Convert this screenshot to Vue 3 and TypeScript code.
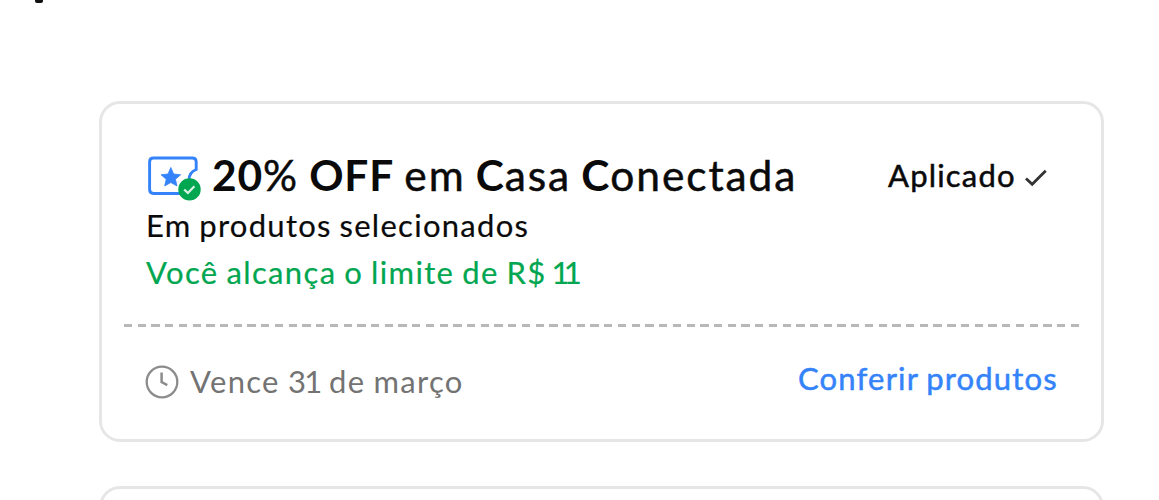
<script setup lang="ts">
interface Word {
  text: string
  strong?: boolean
  digits?: boolean
}

interface Coupon {
  title: Word[]
  scope: string
  limit: Word[]
  expires: Word[]
  status: string
  action: string
}

const coupon: Coupon = {
  title: [
    { text: '20', strong: true },
    { text: '% ' },
    { text: 'OFF', strong: true },
    { text: ' em ' },
    { text: 'C', strong: true },
    { text: 'asa ' },
    { text: 'C', strong: true },
    { text: 'onectada' },
  ],
  scope: 'Em produtos selecionados',
  limit: [{ text: 'Você alcança o limite de R$' }, { text: '11', digits: true }],
  expires: [{ text: 'Vence ' }, { text: '31', digits: true }, { text: ' de março' }],
  status: 'Aplicado',
  action: 'Conferir produtos',
}
</script>

<template>
  <main class="page">
    <div class="page__mark" aria-hidden="true"></div>

    <article class="coupon">
      <section class="coupon__body">
        <header class="coupon__header">
          <svg class="coupon__icon" width="56" height="48" viewBox="0 0 56 48" fill="none">
            <path
              d="M34 40.500H7.500Q3.600 40.500 3.600 36.600V8.900Q3.600 5 7.500 5H46.200Q50.200 5 50.200 9V16.500C45.200 18.500 43 21.500 43 27"
              stroke="#3483fa"
              stroke-width="2.900"
            />
            <path
              d="M24.800 14.500L27.700 21L34.700 21.700L29.400 26.300L31 33L24.800 29.500L18.700 33L20.200 26.300L15 21.700L22 21Z"
              fill="#3483fa"
              stroke="#3483fa"
              stroke-width="0.800"
            />
            <circle cx="43.500" cy="36.400" r="11.200" fill="#00a650" />
            <path d="M38.200 36.500L41.900 40L48.400 33.300" stroke="#d9f2e5" stroke-width="2.300" />
          </svg>
          <h2 class="coupon__title">
            <span
              v-for="(word, i) in coupon.title"
              :key="i"
              :class="{ 'coupon__title-strong': word.strong }"
            >{{ word.text }}</span>
          </h2>
          <span class="coupon__status">{{ coupon.status }}</span>
          <svg class="coupon__check" width="24" height="20" viewBox="0 0 24 20" fill="none">
            <path d="M2 11.500L8.200 17.300L21.700 3.700" stroke="#333" stroke-width="2.800" />
          </svg>
        </header>
        <p class="coupon__scope">{{ coupon.scope }}</p>
        <p class="coupon__limit">
          <span
            v-for="(word, i) in coupon.limit"
            :key="i"
            :class="{ 'coupon__amount': word.digits }"
          >{{ word.text }}</span>
        </p>
      </section>

      <div class="coupon__divider"></div>

      <footer class="coupon__footer">
        <svg class="coupon__clock" width="34" height="34" viewBox="0 0 34 34" fill="none">
          <circle cx="17" cy="17" r="15.300" stroke="#8c8c8c" stroke-width="2.300" />
          <path d="M16.600 7.500V17L22.300 20.200" stroke="#8c8c8c" stroke-width="2.500" />
        </svg>
        <span class="coupon__expires">
          <span
            v-for="(word, i) in coupon.expires"
            :key="i"
            :class="{ 'coupon__day': word.digits }"
          >{{ word.text }}</span>
        </span>
        <a class="coupon__action">{{ coupon.action }}</a>
      </footer>
    </article>

    <article class="coupon"></article>
  </main>
</template>

<style>
body {
  margin: 0;
  background: #fff;
}
</style>

<style scoped>
.page {
  box-sizing: border-box;
  height: 500px;
  overflow: hidden;
  padding: 0 55px 0 99px;
  background: #fff;
  color: #0a0a0a;
  font-family: Lato, 'Liberation Sans', sans-serif;
}

.page__mark {
  width: 8px;
  height: 3px;
  margin: 0 0 98px -64px;
  border-radius: 0 0 2px 2px;
  background: #111;
}

.coupon {
  box-sizing: border-box;
  height: 341px;
  margin-bottom: 44px;
  border: 3px solid #e6e6e6;
  border-radius: 21px;
}

.coupon__body {
  box-sizing: border-box;
  height: 220px;
  padding: 47px 0 0 44px;
}

.coupon__header {
  display: flex;
  align-items: center;
  height: 51px;
}

.coupon__icon,
.coupon__check,
.coupon__clock {
  display: block;
  flex: none;
}

.coupon__title {
  width: 676px;
  margin: 0 0 0 10px;
  padding-bottom: 4px;
  font-size: 42.5px;
  font-weight: 400;
  line-height: 47px;
  letter-spacing: 1.9px;
  word-spacing: -2.5px;
  white-space: pre;
  -webkit-text-stroke: 0.5px currentColor;
}

.coupon__title-strong {
  font-weight: 700;
  letter-spacing: 0.8px;
  -webkit-text-stroke: 0;
}

.coupon__status {
  width: 136px;
  padding-bottom: 3px;
  font-size: 31px;
  letter-spacing: 1.2px;
  white-space: nowrap;
  -webkit-text-stroke: 0.5px currentColor;
}

.coupon__scope,
.coupon__limit {
  display: flex;
  margin: 0;
  font-size: 31px;
  line-height: 47px;
  letter-spacing: 1.28px;
  word-spacing: -1.5px;
  white-space: pre;
  -webkit-text-stroke: 0.2px currentColor;
}

.coupon__limit {
  color: #00a650;
  letter-spacing: 1.37px;
}

.coupon__amount {
  margin-left: 5px;
  letter-spacing: -5.7px;
}

.coupon__divider {
  width: 955px;
  height: 3px;
  margin-left: 22px;
  background: repeating-linear-gradient(90deg, #b8b8b8 0 8.300px, transparent 8.300px 13.720px);
}

.coupon__footer {
  display: flex;
  align-items: center;
  height: 109px;
  padding-left: 43px;
}

.coupon__expires {
  display: flex;
  width: 608px;
  margin-left: 11px;
  padding-bottom: 1px;
  color: #737373;
  font-size: 31px;
  letter-spacing: 1.3px;
  word-spacing: -1px;
  white-space: pre;
}

.coupon__day {
  letter-spacing: -1.6px;
}

.coupon__action {
  padding-bottom: 7px;
  color: #3483fa;
  font-size: 31px;
  letter-spacing: 1.18px;
  word-spacing: -1.5px;
  white-space: nowrap;
  -webkit-text-stroke: 0.5px currentColor;
}
</style>
